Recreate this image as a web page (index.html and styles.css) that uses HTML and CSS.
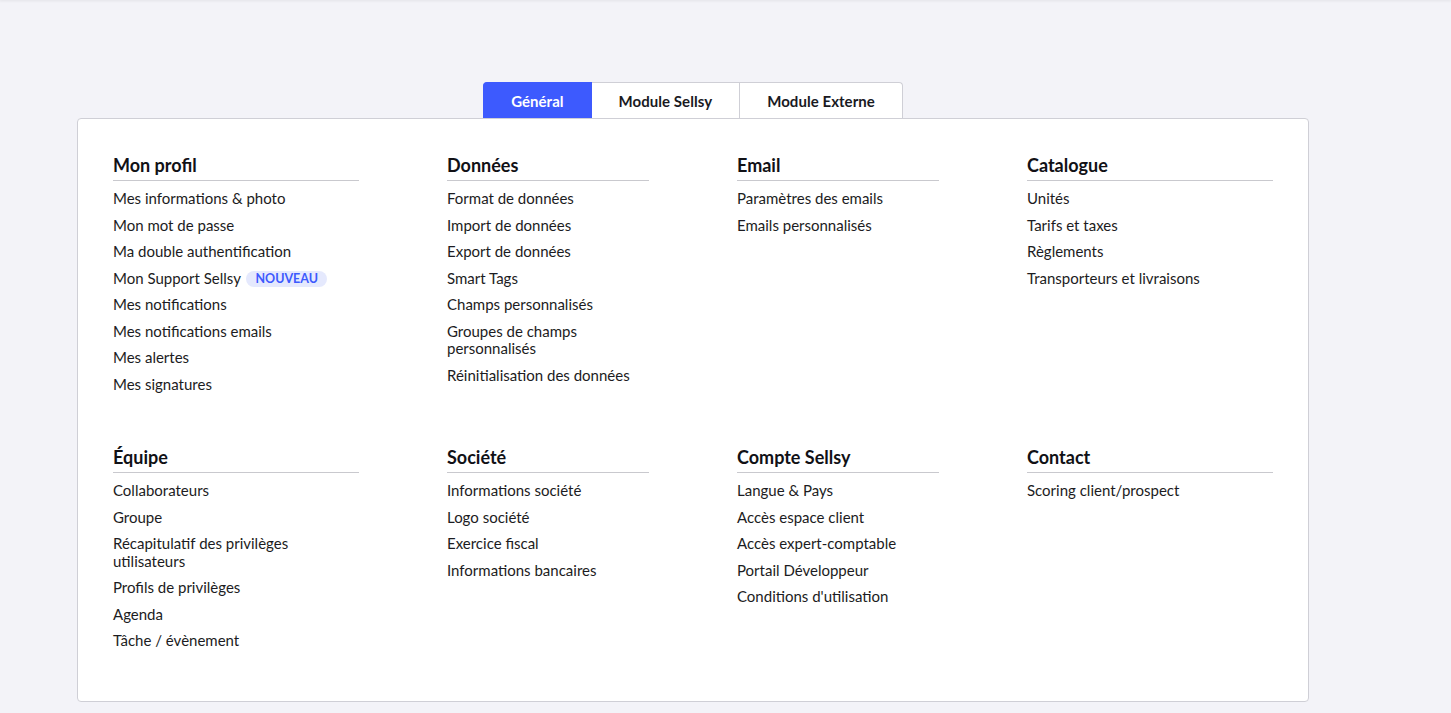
FILE: index.html
```html
<!DOCTYPE html>
<html lang="fr">
<head>
<meta charset="utf-8">
<title>Paramètres</title>
<link rel="stylesheet" href="styles.css">
</head>
<body>
<div class="topbar"></div>
<main class="page">
  <nav class="tabs">
    <a class="tab active">Général</a>
    <a class="tab">Module Sellsy</a>
    <a class="tab">Module Externe</a>
  </nav>
  <section class="card">
    <div class="grid">
      <div class="group">
        <h3>Mon profil</h3>
        <ul>
          <li>Mes informations &amp; photo</li>
          <li>Mon mot de passe</li>
          <li>Ma double authentification</li>
          <li>Mon Support Sellsy <span class="badge">NOUVEAU</span></li>
          <li>Mes notifications</li>
          <li>Mes notifications emails</li>
          <li>Mes alertes</li>
          <li>Mes signatures</li>
        </ul>
      </div>
      <div class="group">
        <h3>Données</h3>
        <ul>
          <li>Format de données</li>
          <li>Import de données</li>
          <li>Export de données</li>
          <li>Smart Tags</li>
          <li>Champs personnalisés</li>
          <li>Groupes de champs personnalisés</li>
          <li>Réinitialisation des données</li>
        </ul>
      </div>
      <div class="group">
        <h3>Email</h3>
        <ul>
          <li>Paramètres des emails</li>
          <li>Emails personnalisés</li>
        </ul>
      </div>
      <div class="group">
        <h3>Catalogue</h3>
        <ul>
          <li>Unités</li>
          <li>Tarifs et taxes</li>
          <li>Règlements</li>
          <li>Transporteurs et livraisons</li>
        </ul>
      </div>
      <div class="group">
        <h3>Équipe</h3>
        <ul>
          <li>Collaborateurs</li>
          <li>Groupe</li>
          <li>Récapitulatif des privilèges utilisateurs</li>
          <li>Profils de privilèges</li>
          <li>Agenda</li>
          <li>Tâche / évènement</li>
        </ul>
      </div>
      <div class="group">
        <h3>Société</h3>
        <ul>
          <li>Informations société</li>
          <li>Logo société</li>
          <li>Exercice fiscal</li>
          <li>Informations bancaires</li>
        </ul>
      </div>
      <div class="group">
        <h3>Compte Sellsy</h3>
        <ul>
          <li>Langue &amp; Pays</li>
          <li>Accès espace client</li>
          <li>Accès expert-comptable</li>
          <li>Portail Développeur</li>
          <li>Conditions d'utilisation</li>
        </ul>
      </div>
      <div class="group">
        <h3>Contact</h3>
        <ul>
          <li>Scoring client/prospect</li>
        </ul>
      </div>
    </div>
  </section>
</main>
</body>
</html>
```

FILE: styles.css
```css
* { box-sizing: border-box; }
html, body {
  margin: 0;
  padding: 0;
  background: #f3f3f8;
  font-family: "Lato", "Noto Sans", sans-serif;
  color: #1c1c22;
}
.topbar {
  height: 0;
  box-shadow: 0 0 3px 1px rgba(0, 0, 0, 0.08);
}
.page {
  width: 1232px;
  margin-left: 77px;
  padding-top: 82px;
}
.tabs {
  display: flex;
  justify-content: center;
}
.tab {
  display: flex;
  align-items: center;
  height: 36px;
  padding: 0 27px;
  background: #fff;
  border: 1px solid #cfcfd6;
  border-bottom: none;
  border-left: none;
  font-size: 15px;
  font-weight: 700;
  letter-spacing: 0.05px;
  color: #1a1a1f;
  cursor: pointer;
}
.tab:first-child { border-left: 1px solid #cfcfd6; border-top-left-radius: 4px; }
.tab:last-child { border-top-right-radius: 4px; }
.tab.active {
  background: #3d5afe;
  border-color: #3d5afe;
  color: #fff;
}
.card {
  background: #fff;
  border: 1px solid #cfcfd6;
  border-radius: 4px;
  padding: 35px 34px 42px 35px;
}
.grid {
  display: grid;
  grid-template-columns: 246px 202px 202px 246px;
  column-gap: 88px;
  row-gap: 44px;
}
.group h3 {
  margin: 0;
  font-size: 18px;
  line-height: 22px;
  font-weight: 700;
  color: #111116;
  padding-bottom: 4px;
  border-bottom: 1px solid #c9c9ce;
}
.group ul {
  list-style: none;
  margin: 9px 0 0;
  padding: 0;
}
.group li {
  font-size: 15px;
  line-height: 17.5px;
  margin-bottom: 9px;
}
.badge {
  display: inline-block;
  margin-left: 2px;
  padding: 0 9px;
  height: 16px;
  line-height: 16px;
  border-radius: 8px;
  background: #e5e9fd;
  color: #3d5afe;
  font-size: 12.5px;
  font-weight: 700;
  vertical-align: 1px;
}
```
